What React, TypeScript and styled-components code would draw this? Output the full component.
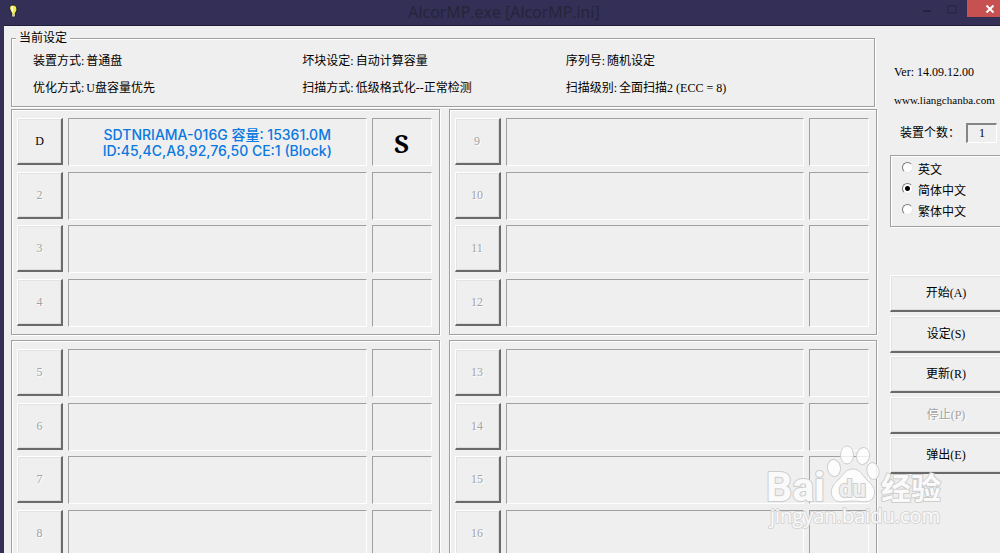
import React, { useState } from 'react';
import styled, { createGlobalStyle, css } from 'styled-components';

const face = '#efefef';
const shade = '#a0a0a0';
const darkShade = '#6a6a6a';
const navy = '#332f56';

const GlobalStyle = createGlobalStyle`
  *, *::before, *::after { box-sizing: border-box; }
  body {
    margin: 0;
    background: ${face};
    color: #000;
    font: 12px/16px "Liberation Serif", "Noto Sans CJK SC", serif;
  }
  button, input { font: inherit; color: inherit; }
`;

const etched = css`
  border: 1px solid ${shade};
  box-shadow: 1px 1px 0 #fff, inset 1px 1px 0 #fff;
`;

const Window = styled.div`
  position: relative;
  height: 100vh;
  overflow: hidden;
  display: flex;
  flex-direction: column;
  border-left: 4px solid ${navy};
  background: ${face};
`;

const TitleBar = styled.header`
  flex: none;
  display: grid;
  grid-template-columns: 89px 1fr 85px;
  height: 26px;
  background: ${navy};
  border-bottom: 1px solid #211e3c;
`;

const AppIcon = styled.svg`
  width: 10px;
  height: 16px;
  margin: 4px 0 0 4px;
`;

const Title = styled.h1`
  margin: 0;
  text-align: center;
  font: 16px/24px "Open Sans", "Noto Sans", sans-serif;
  color: #262438;
`;

const WindowButtons = styled.div`
  display: flex;
`;

const WindowButton = styled.button<{ $close?: boolean }>`
  flex: none;
  width: ${p => (p.$close ? 45 : 22)}px;
  height: 17px;
  margin-right: ${p => (p.$close ? 0 : 4)}px;
  padding: 0;
  border: 0;
  display: grid;
  place-items: center;
  color: ${p => (p.$close ? '#fff' : '#25223f')};
  background: ${p => (p.$close ? '#c75050' : 'transparent')};
`;

const Body = styled.main`
  display: flex;
  gap: 13px;
  padding: 4px 0 0 7px;
`;

const Devices = styled.div`
  flex: 1;
  min-width: 0;
`;

const Settings = styled.fieldset`
  ${etched}
  height: 77px;
  margin: 0 2px 2px 0;
  padding: 7px 0 0 21px;
`;

const Legend = styled.legend`
  margin-left: -17px;
  padding: 0 3px;
  background: ${face};
`;

const SettingsGrid = styled.dl`
  display: grid;
  grid-template-columns: 270fr 264fr 309fr;
  row-gap: 11px;
  margin: 0;
`;

const Setting = styled.div`
  display: flex;
  gap: 2px;
  white-space: nowrap;
  dt, dd { margin: 0; }
`;

const Panels = styled.div`
  display: grid;
  grid-template-columns: 1fr 1fr;
  gap: 5px 9px;
`;

const Panel = styled.section`
  ${etched}
  height: 226px;
  padding: 8px 7px 7px 5px;
  display: flex;
  flex-direction: column;
  justify-content: space-between;
`;

const Slot = styled.div`
  display: grid;
  grid-template-columns: 46px 1fr 60px;
  gap: 5px;
  height: 48px;
`;

const raised = css`
  padding: 0;
  background: ${face};
  border: 1px solid #fff;
  border-right: 2px solid ${darkShade};
  border-bottom: 2px solid ${darkShade};
  box-shadow: inset 1px 1px 0 #e3e3e3, inset -1px -1px 0 #dcdcdc;
`;

const SlotButton = styled.button`
  ${raised}
  height: 47px;
  &:disabled { color: #a3a3a3; text-shadow: 1px 1px 0 #fff; }
`;

const Cell = styled.div`
  display: flex;
  flex-direction: column;
  align-items: center;
  justify-content: center;
  padding-top: 2px;
  border: 1px solid #fff;
  border-top-color: ${shade};
  border-left-color: ${shade};
`;

const DeviceText = styled.span`
  font: 500 14px/16px Inter, "Noto Sans CJK SC", sans-serif;
  color: #0a78e0;
  white-space: nowrap;
`;

const Status = styled.strong`
  font: bold 26px/32px "Noto Serif", "Liberation Serif", serif;
`;

const Sidebar = styled.aside`
  flex: none;
  width: 113px;
  margin-right: -3px;
  padding-top: 34px;
`;

const Info = styled.div<{ $small?: boolean }>`
  height: 28px;
  padding-left: 4px;
  font-size: ${p => (p.$small ? 11 : 12)}px;
  white-space: nowrap;
`;

const CountRow = styled.label`
  display: flex;
  align-items: center;
  height: 22px;
  margin-top: 2px;
  padding-left: 10px;
  white-space: nowrap;
`;

const CountInput = styled.input`
  width: 31px;
  height: 20px;
  margin-left: 6px;
  padding: 0;
  text-align: center;
  background: ${face};
  border: 1px solid #fff;
  border-top: 2px solid #858585;
  border-left: 2px solid #858585;
`;

const Languages = styled.div`
  ${etched}
  height: 72px;
  margin-top: 11px;
  padding: 3px 0 0 11px;
`;

const Language = styled.label`
  display: flex;
  align-items: center;
  gap: 5px;
  height: 21px;
`;

const Radio = styled.input`
  appearance: none;
  width: 11px;
  height: 11px;
  margin: 0 0 4px;
  border-radius: 50%;
  border: 1px solid #7b7b7b;
  border-right-color: #e8e8e8;
  border-bottom-color: #e8e8e8;
  background: #fff;
  &:checked { background: radial-gradient(circle, #000 2px, #fff 3px); }
`;

const Actions = styled.div`
  display: flex;
  flex-direction: column;
  justify-content: space-between;
  height: 199px;
  margin-top: 48px;
`;

const Action = styled.button`
  ${raised}
  height: 37px;
  &:disabled { color: #a3a3a3; text-shadow: 1px 1px 0 #fff; }
`;

const Watermark = styled.svg`
  position: absolute;
  right: 54px;
  bottom: 20px;
  width: 180px;
  height: 90px;
  overflow: visible;
  pointer-events: none;
`;

const settings = [
  ['装置方式:', '普通盘'],
  ['坏块设定:', '自动计算容量'],
  ['序列号:', '随机设定'],
  ['优化方式:', 'U盘容量优先'],
  ['扫描方式:', '低级格式化--正常检测'],
  ['扫描级别:', '全面扫描2 (ECC = 8)'],
];

const panels = [
  ['D', '2', '3', '4'],
  ['9', '10', '11', '12'],
  ['5', '6', '7', '8'],
  ['13', '14', '15', '16'],
];

const languages = ['英文', '简体中文', '繁体中文'];
const actions = ['开始(A)', '设定(S)', '更新(R)', '停止(P)', '弹出(E)'];

function DeviceSlot({ name }: { name: string }) {
  const active = name === 'D';
  return (
    <Slot>
      <SlotButton disabled={!active}>{name}</SlotButton>
      <Cell>
        {active && (
          <>
            <DeviceText>SDTNRIAMA-016G 容量: 15361.0M</DeviceText>
            <DeviceText>ID:45,4C,A8,92,76,50 CE:1 (Block)</DeviceText>
          </>
        )}
      </Cell>
      <Cell>{active && <Status>S</Status>}</Cell>
    </Slot>
  );
}

function BaiduMark() {
  return (
    <Watermark viewBox="0 0 180 90" aria-hidden="true">
      <g fill="#fff" fillOpacity="0.8" stroke="#cfcfcf" strokeWidth="1">
        <ellipse cx="81" cy="12" rx="6.5" ry="9" />
        <ellipse cx="97" cy="13" rx="6.5" ry="8.5" transform="rotate(10 97 13)" />
        <ellipse cx="68" cy="25" rx="6.5" ry="8.5" transform="rotate(-8 68 25)" />
        <ellipse cx="107" cy="28" rx="6" ry="8.5" transform="rotate(-12 107 28)" />
        <path d="M87 26C80 26 77 32 73 36C66 42 63 49 67 55C71 61 79 58 87 58C95 58 103 61 107 55C111 48 107 42 101 37C96 32 94 26 87 26Z" />
      </g>
      <g fill="#fafafa" stroke="#cdcdcd" strokeWidth="2" strokeLinejoin="round" paintOrder="stroke" fontWeight="bold">
        <text x="0" y="58" fontSize="41" fontFamily="Roboto, sans-serif">Bai</text>
        <text x="73" y="54" fontSize="24" fill="#f0f0f0" fontFamily="Roboto, sans-serif">du</text>
        <text x="115" y="56" fontSize="30" fontFamily='"Noto Sans CJK SC", sans-serif'>经验</text>
      </g>
      <text x="4" y="80" fontSize="20" fill="#fafafa" stroke="#d6d6d6" strokeWidth="2" strokeLinejoin="round" paintOrder="stroke" fontFamily='"Open Sans", sans-serif'>
        jingyan.baidu.com
      </text>
    </Watermark>
  );
}

export default function App() {
  const [language, setLanguage] = useState(languages[1]);
  return (
    <>
      <GlobalStyle />
      <Window>
        <TitleBar>
          <AppIcon viewBox="0 0 10 16" aria-hidden="true">
            <path d="M5 1C2 1 1 3 2 6L4 10V12L5 13L7 12V10L9 6C9 3 8 1 5 1Z" fill="#f4ee43" stroke="#1d1a30" strokeWidth="1" />
            <path d="M3 3L4 8L5 9V2Z" fill="#fffde0" />
            <path d="M4 10H7V12L5 13L4 12Z" fill="#c8c8a0" />
          </AppIcon>
          <Title>AlcorMP.exe [AlcorMP.ini]</Title>
          <WindowButtons>
            <WindowButton aria-label="Minimize">
              <svg width="10" height="10"><path d="M2 6H10V8H2Z" fill="currentColor" /></svg>
            </WindowButton>
            <WindowButton aria-label="Maximize" disabled>
              <svg width="10" height="10"><path d="M1 2H9V9H1Z" fill="none" stroke="#2a2748" strokeWidth="1.5" /></svg>
            </WindowButton>
            <WindowButton $close aria-label="Close">
              <svg width="10" height="10"><path d="M1.5 1.5L8.5 8.5M8.5 1.5L1.5 8.5" stroke="currentColor" strokeWidth="2" /></svg>
            </WindowButton>
          </WindowButtons>
        </TitleBar>
        <Body>
          <Devices>
            <Settings>
              <Legend>当前设定</Legend>
              <SettingsGrid>
                {settings.map(([label, value]) => (
                  <Setting key={label}>
                    <dt>{label}</dt>
                    <dd>{value}</dd>
                  </Setting>
                ))}
              </SettingsGrid>
            </Settings>
            <Panels>
              {panels.map(names => (
                <Panel key={names[0]}>
                  {names.map(name => <DeviceSlot key={name} name={name} />)}
                </Panel>
              ))}
            </Panels>
          </Devices>
          <Sidebar>
            <Info>Ver: 14.09.12.00</Info>
            <Info $small>www.liangchanba.com</Info>
            <CountRow>
              装置个数：
              <CountInput readOnly value="1" />
            </CountRow>
            <Languages role="radiogroup" aria-label="语言">
              {languages.map(item => (
                <Language key={item}>
                  <Radio type="radio" name="language" checked={language === item} onChange={() => setLanguage(item)} />
                  {item}
                </Language>
              ))}
            </Languages>
            <Actions>
              {actions.map(item => (
                <Action key={item} disabled={item === '停止(P)'}>{item}</Action>
              ))}
            </Actions>
          </Sidebar>
        </Body>
        <BaiduMark />
      </Window>
    </>
  );
}
